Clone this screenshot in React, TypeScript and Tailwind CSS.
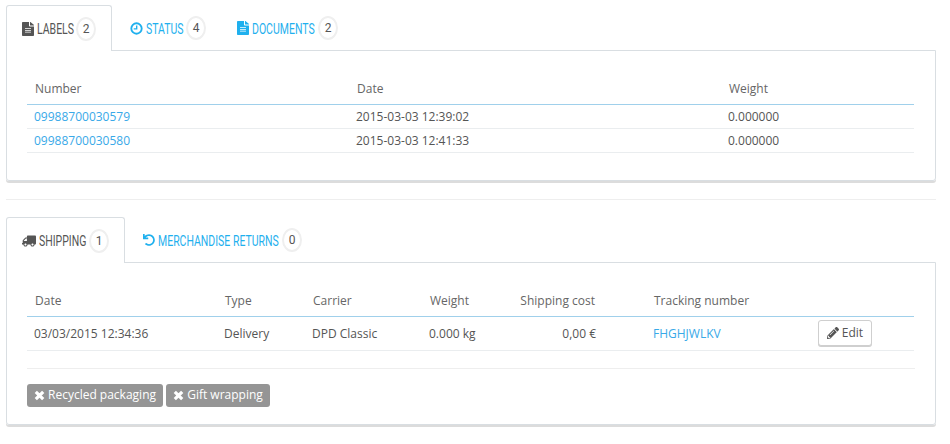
import { FaFileAlt, FaTruck, FaUndo, FaPencilAlt } from "react-icons/fa";
import type { ReactNode } from "react";

function ClockIcon() {
    return (
        <svg viewBox="0 0 14 14" className="h-[13px] w-[13px]" fill="none" stroke="currentColor">
            <circle cx="7" cy="7" r="5.6" strokeWidth="2" />
            <path d="M7.2 3.8V7.4H4" strokeWidth="1.5" />
        </svg>
    );
}

function RemoveIcon() {
    return (
        <svg viewBox="0 0 11 11" className="h-[11px] w-[11px]" fill="none" stroke="currentColor" strokeWidth="3.2">
            <path d="M1.8 1.8L9.2 9.2M9.2 1.8L1.8 9.2" />
        </svg>
    );
}

function Badge({ n }: { n: number }) {
    return (
        <span className="ml-[3px] flex h-[24px] w-[20px] items-center justify-center rounded-[50%] border-2 border-[#efefef] bg-white font-['Roboto',sans-serif] text-[12px] text-[#555]">
            {n}
        </span>
    );
}

function Tab({ icon, label, labelWidth, n, active, width }: { icon: ReactNode; label: string; labelWidth: string; n: number; active?: boolean; width: string }) {
    return (
        <div
            className={`${width} ${active ? "relative z-10 rounded-t-[3px] border border-b-0 border-[#d9dee2] bg-white pl-[15px] text-[#555]" : "pl-[18px] text-[#1fb0ee]"} -mb-px flex h-[46px] items-center`}
        >
            {icon}
            <span className={`${labelWidth} ml-[3px] mt-[2px] inline-block origin-left scale-x-[0.75] whitespace-nowrap font-['Roboto',sans-serif] text-[14px] uppercase`}>
                {label}
            </span>
            <Badge n={n} />
        </div>
    );
}

const fileIcon = <FaFileAlt className="h-[14px] w-[12px]" preserveAspectRatio="none" />;

const labels = [
    { number: "09988700030579", date: "2015-03-03 12:39:02", weight: "0.000000" },
    { number: "09988700030580", date: "2015-03-03 12:41:33", weight: "0.000000" },
];

export default function App() {
    return (
        <div className="h-[444px] w-[950px] overflow-hidden bg-white pl-[6px] pr-[14px] pt-[5px] font-['Open_Sans',sans-serif] text-[12px] text-[#555]">
            {/* Labels panel */}
            <div className="flex">
                <Tab active width="w-[106px]" icon={fileIcon} label="Labels" labelWidth="w-[36px]" n={2} />
                <Tab width="w-[107px]" icon={<ClockIcon />} label="Status" labelWidth="w-[37px]" n={4} />
                <Tab width="w-[134px]" icon={fileIcon} label="Documents" labelWidth="w-[63px]" n={2} />
            </div>
            <div className="h-[131px] rounded-b-[3px] border border-[#d9dee2] px-[20px] pt-[25px] shadow-[0_2px_0_#dcdcdc]">
                <table className="w-[887px] table-fixed border-collapse">
                    <thead>
                        <tr className="h-[28px] border-b border-[#a0d0eb] text-[#666]">
                            <th className="w-[322px] px-[8px] pb-[1px] text-left font-normal">Number</th>
                            <th className="w-[372px] px-[8px] pb-[1px] text-left font-normal">Date</th>
                            <th className="px-[8px] pb-[1px] text-left font-normal">Weight</th>
                        </tr>
                    </thead>
                    <tbody>
                        {labels.map((row) => (
                            <tr key={row.number} className="h-[24px] border-b border-[#eaedef]">
                                <td className="px-[7px] pt-[1px] text-[#39a9e8]">{row.number}</td>
                                <td className="px-[7px] pt-[1px]">{row.date}</td>
                                <td className="px-[7px] pt-[1px]">{row.weight}</td>
                            </tr>
                        ))}
                    </tbody>
                </table>
            </div>

            <div className="mb-[17px] mt-[18px] h-px bg-[#eeeeee]" />

            {/* Shipping panel */}
            <div className="flex">
                <Tab active width="w-[119px]" icon={<FaTruck className="h-[12px] w-[14px] -scale-x-100" />} label="Shipping" labelWidth="w-[47px]" n={1} />
                <Tab width="w-[195px]" icon={<FaUndo className="h-[12px] w-[12px]" />} label="Merchandise returns" labelWidth="w-[121px]" n={0} />
            </div>
            <div className="h-[163px] rounded-b-[3px] border border-[#d9dee2] px-[20px] pt-[25px] shadow-[0_2px_0_#dcdcdc]">
                <table className="w-[887px] table-fixed border-collapse">
                    <thead>
                        <tr className="h-[28px] border-b border-[#a0d0eb] text-[#666]">
                            <th className="w-[190px] px-[8px] pb-[1px] text-left font-normal">Date</th>
                            <th className="w-[88px] px-[8px] pb-[1px] text-left font-normal">Type</th>
                            <th className="w-[117px] px-[8px] pb-[1px] text-left font-normal">Carrier</th>
                            <th className="w-[82px] px-[8px] pb-[1px] text-left font-normal">Weight</th>
                            <th className="w-[99px] whitespace-nowrap px-[8px] pb-[1px] text-right font-normal">Shipping cost</th>
                            <th className="w-[215px] pb-[1px] pl-[51px] text-left font-normal">Tracking number</th>
                            <th />
                        </tr>
                    </thead>
                    <tbody>
                        <tr className="h-[34px] border-b border-[#eaedef]">
                            <td className="px-[7px] pt-[1px]">03/03/2015 12:34:36</td>
                            <td className="px-[7px] pt-[1px]">Delivery</td>
                            <td className="px-[7px] pt-[1px]">DPD Classic</td>
                            <td className="px-[7px] pt-[1px]">0.000 kg</td>
                            <td className="px-[7px] pt-[1px] text-right">0,00 €</td>
                            <td className="pl-[50px] pt-[1px] text-[#39a9e8]">FHGHJWLKV</td>
                            <td>
                                <button className="flex h-[26px] w-[54px] items-center justify-center gap-[3px] rounded-[3px] border border-[#cfcfcf] bg-white text-[12px] text-[#555] shadow-[0_1px_0_#cfcfcf]">
                                    <FaPencilAlt className="h-[12px] w-[12px]" />
                                    Edit
                                </button>
                            </td>
                        </tr>
                    </tbody>
                </table>
                <div className="mt-[17px] border-t border-[#eeeeee] pt-[15px]">
                    <div className="flex gap-[3px]">
                        <span className="flex h-[23px] w-[136px] items-center justify-center gap-[3px] rounded-[3px] bg-[#959595] text-[12px] font-medium text-white">
                            <RemoveIcon />
                            Recycled packaging
                        </span>
                        <span className="flex h-[23px] w-[104px] items-center justify-center gap-[3px] rounded-[3px] bg-[#959595] text-[12px] font-medium text-white">
                            <RemoveIcon />
                            Gift wrapping
                        </span>
                    </div>
                </div>
            </div>
        </div>
    );
}
